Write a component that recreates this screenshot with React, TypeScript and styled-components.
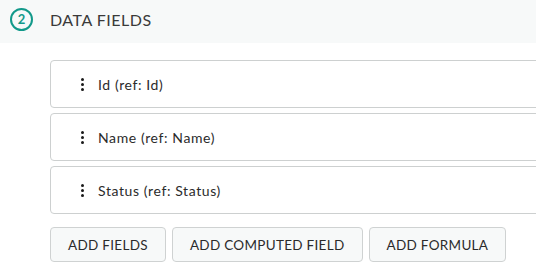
import styled, { createGlobalStyle } from "styled-components";

const GlobalStyle = createGlobalStyle`
  html, body {
    margin: 0;
    padding: 0;
    background: #ffffff;
    overflow: hidden;
  }
  body {
    font-family: Lato, "Noto Sans", sans-serif;
    color: #333;
  }
`;

const fields = [
  { name: "Id", ref: "Id" },
  { name: "Name", ref: "Name" },
  { name: "Status", ref: "Status" },
];

const actions = ["ADD FIELDS", "ADD COMPUTED FIELD", "ADD FORMULA"];

const App = () => {
  return (
    <>
      <GlobalStyle />
      <Section>
        <Header>
          <StepBadge>2</StepBadge>
          <Title>DATA FIELDS</Title>
        </Header>
        <Body>
          <FieldList>
            {fields.map((f) => (
              <FieldCard key={f.name}>
                <DragHandle>
                  <span />
                  <span />
                  <span />
                </DragHandle>
                <FieldLabel>
                  {f.name} (ref: {f.ref})
                </FieldLabel>
              </FieldCard>
            ))}
          </FieldList>
          <Actions>
            {actions.map((a) => (
              <ActionButton key={a}>{a}</ActionButton>
            ))}
          </Actions>
        </Body>
      </Section>
    </>
  );
};

const Section = styled.div`
  width: 100%;
`;

const Header = styled.div`
  display: flex;
  align-items: center;
  height: 43px;
  padding: 0 0 5px 10px;
  box-sizing: border-box;
  gap: 17px;
  background: #f7f9f9;
`;

const StepBadge = styled.div`
  width: 23px;
  height: 23px;
  box-sizing: border-box;
  border: 2px solid #12998a;
  border-radius: 50%;
  display: flex;
  align-items: center;
  justify-content: center;
  color: #12998a;
  font-weight: 700;
  font-size: 13px;
`;

const Title = styled.div`
  font-size: 16px;
  letter-spacing: 0.5px;
  color: #3a3a3a;
`;

const Body = styled.div`
  padding: 17px 0 0 50px;
`;

const FieldList = styled.div`
  display: flex;
  flex-direction: column;
  gap: 5px;
  margin-right: -10px;
`;

const FieldCard = styled.div`
  display: flex;
  align-items: center;
  height: 48px;
  box-sizing: border-box;
  border: 1px solid #cdd0d0;
  border-radius: 4px;
  padding-left: 30px;
  gap: 14px;
`;

const DragHandle = styled.div`
  display: flex;
  flex-direction: column;
  gap: 2px;

  span {
    width: 3px;
    height: 3px;
    border-radius: 50%;
    background: #1a1a1a;
  }
`;

const FieldLabel = styled.div`
  font-size: 14px;
  letter-spacing: 0.6px;
  color: #2b2b2b;
`;

const Actions = styled.div`
  display: flex;
  gap: 6px;
  margin-top: 13px;
`;

const ActionButton = styled.button`
  height: 35px;
  padding: 0 17px;
  border: 1px solid #cfd2d2;
  border-radius: 4px;
  background: #f7f9f9;
  font-family: Lato, "Noto Sans", sans-serif;
  font-size: 13.5px;
  letter-spacing: 0.3px;
  color: #2b2b2b;
  cursor: pointer;
`;

export default App;
